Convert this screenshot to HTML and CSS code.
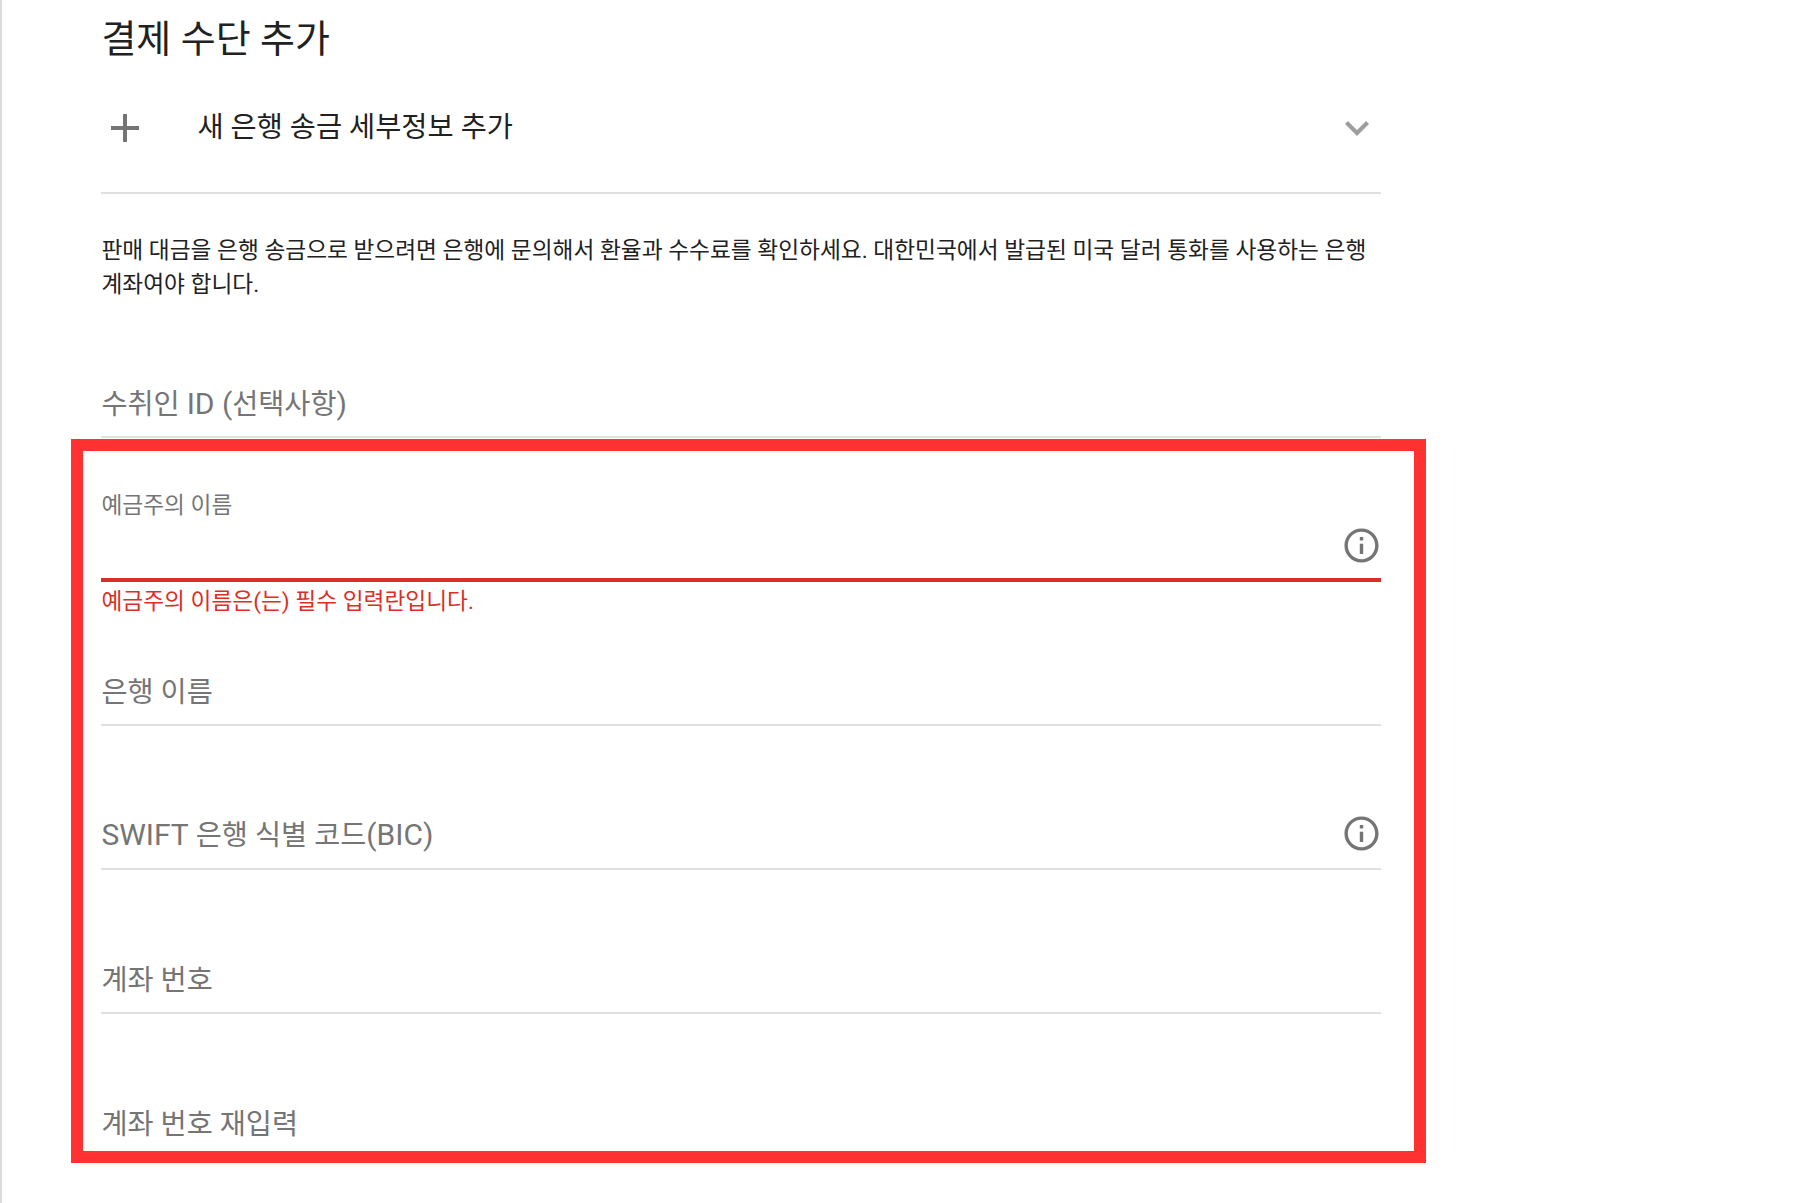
FILE: index.html
```html
<!DOCTYPE html>
<html lang="ko">
<head>
<meta charset="utf-8">
<meta name="viewport" content="width=device-width, initial-scale=1.0">
<title>결제 수단 추가</title>
<link rel="stylesheet" href="styles.css">
</head>
<body>
<main class="panel">
  <h1 class="title">결제 수단 추가</h1>
  <div class="method">
    <svg class="icon-plus" viewBox="0 0 28 28"><path d="M14 0v28M0 14h28"/></svg>
    <span class="method-name">새 은행 송금 세부정보 추가</span>
    <svg class="icon-chevron" viewBox="0 0 24 15"><path d="M1.5 1.5L12 12L22.5 1.5"/></svg>
  </div>
  <p class="notice">판매 대금을 은행 송금으로 받으려면 은행에 문의해서 환율과 수수료를 확인하세요. 대한민국에서 발급된 미국 달러 통화를 사용하는 은행 계좌여야 합니다.</p>
  <form class="form">
    <div class="field">
      <span class="label">수취인 <span class="latin">ID (</span>선택사항<span class="latin">)</span></span>
    </div>
    <div class="field field-error">
      <span class="label-small">예금주의 이름</span>
      <svg class="icon-info" viewBox="0 0 24 24"><path d="M11 7h2v2h-2zm0 4h2v6h-2zm1-9C6.48 2 2 6.48 2 12s4.48 10 10 10 10-4.48 10-10S17.52 2 12 2zm0 18c-4.41 0-8-3.59-8-8s3.59-8 8-8 8 3.59 8 8-3.59 8-8 8z"/></svg>
    </div>
    <div class="field">
      <span class="error-text">예금주의 이름은(는) 필수 입력란입니다.</span>
      <span class="label">은행 이름</span>
    </div>
    <div class="field">
      <span class="label"><span class="latin">SWIFT</span> 은행 식별 코드<span class="latin">(BIC)</span></span>
      <svg class="icon-info" viewBox="0 0 24 24"><path d="M11 7h2v2h-2zm0 4h2v6h-2zm1-9C6.48 2 2 6.48 2 12s4.48 10 10 10 10-4.48 10-10S17.52 2 12 2zm0 18c-4.41 0-8-3.59-8-8s3.59-8 8-8 8 3.59 8 8-3.59 8-8 8z"/></svg>
    </div>
    <div class="field">
      <span class="label">계좌 번호</span>
    </div>
    <div class="field">
      <span class="label">계좌 번호 재입력</span>
    </div>
  </form>
</main>
<div class="highlight"></div>
</body>
</html>
```
FILE: styles.css
```css
* {
  margin: 0;
  padding: 0;
  box-sizing: border-box;
}
body {
  position: relative;
  height: 1203px;
  overflow: hidden;
  background: #fff;
  border-left: 2px solid #dadce3;
  font-family: Roboto, "Noto Sans CJK KR", "Noto Sans CJK SC", sans-serif;
  color: #212121;
}
.panel {
  width: 1280px;
  margin-left: 99.4px;
}
.title {
  height: 80px;
  padding-top: 11px;
  font-size: 38px;
  font-weight: 400;
  line-height: 56px;
}
.method {
  display: flex;
  align-items: center;
  height: 114px;
  padding: 0 12px 16px 10px;
  border-bottom: 2px solid #e0e0e0;
}
.method-name {
  flex: 1;
  margin-left: 58px;
  font-size: 28.4px;
  line-height: 40px;
}
.icon-plus {
  width: 28px;
  height: 28px;
  fill: none;
  stroke: #757575;
  stroke-width: 4;
}
.icon-chevron {
  width: 24px;
  height: 15px;
  fill: none;
  stroke: #9e9e9e;
  stroke-width: 4.2;
}
.notice {
  height: 100px;
  margin-top: 40px;
  font-size: 22.7px;
  line-height: 34px;
  word-break: keep-all;
}
.form {
  margin-top: -40px;
}
.field {
  display: flex;
  flex-wrap: wrap;
  justify-content: space-between;
  align-content: flex-end;
  align-items: center;
  height: 144px;
  padding-bottom: 10px;
  border-bottom: 2px solid #e0e0e0;
  color: #757575;
}
.label {
  font-size: 28.35px;
  line-height: 42px;
}
.latin {
  font-size: 30px;
  line-height: 1;
}
.label-small {
  width: 100%;
  margin-bottom: 3px;
  font-size: 22.7px;
  line-height: 32px;
}
.error-text {
  width: 100%;
  margin-bottom: 54px;
  color: #d93025;
  font-size: 22.7px;
  line-height: 32px;
}
.field-error {
  border-bottom: 4px solid #d93025;
  justify-content: flex-end;
  padding-bottom: 12px;
}
.icon-info {
  width: 41px;
  height: 41px;
  margin-right: -0.6px;
  margin-bottom: 4px;
  fill: #757575;
}
.field-error .icon-info {
  margin-bottom: 0;
}
/* red frame around the required fields */
.highlight {
  position: absolute;
  left: 68.5px;
  top: 439px;
  width: 1355px;
  height: 724px;
  border: 12px solid #ff3131;
}
```
